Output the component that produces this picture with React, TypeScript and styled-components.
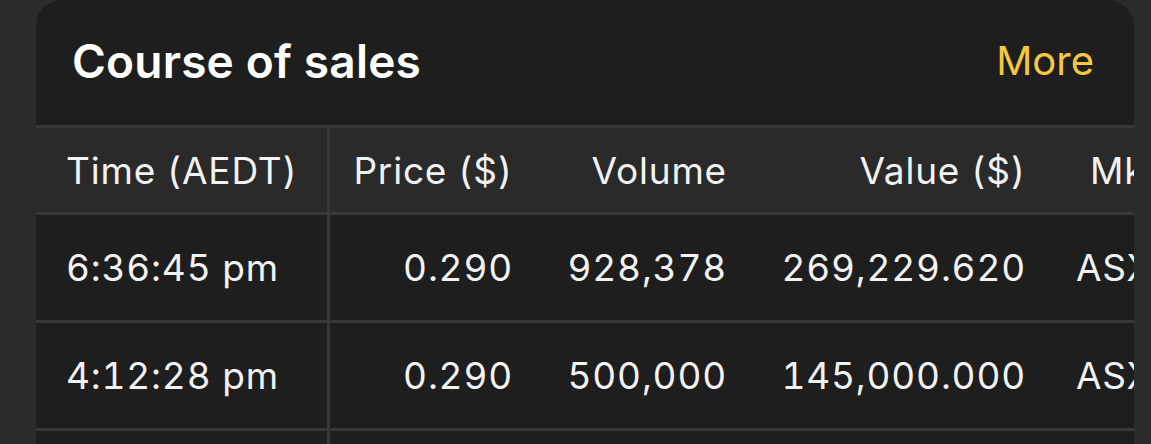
import React from "react";
import styled, { createGlobalStyle } from "styled-components";

const Global = createGlobalStyle`
  html, body { margin: 0; padding: 0; background: #2b2b2b; }
  body { font-family: Inter, "Noto Sans", sans-serif; -webkit-font-smoothing: antialiased; }
`;

const Page = styled.div`
  width: 1151px;
  height: 444px;
  overflow: hidden;
  background: #2b2b2b;
  padding-left: 36px;
  padding-right: 17px;
  box-sizing: border-box;
`;

const Card = styled.section`
  background: #1e1e1e;
  border-radius: 26px 26px 0 0;
  overflow: hidden;
  height: 100%;
`;

const Header = styled.header`
  height: 125px;
  display: flex;
  align-items: center;
  justify-content: space-between;
  padding: 0 40px 0 36px;
  box-sizing: border-box;
`;

const Title = styled.h2`
  margin: 0;
  font-size: 46px;
  font-weight: 600;
  color: #ffffff;
  letter-spacing: 0.2px;
  padding-bottom: 4px;
`;

const MoreLink = styled.a`
  font-size: 40px;
  font-weight: 400;
  color: #f5c842;
  text-decoration: none;
  padding-bottom: 4px;
`;

const Table = styled.div`
  display: grid;
  grid-template-columns: 294px 198px 214px 299px 200px;
  border-top: 3px solid #383838;
`;

const Cell = styled.div<{ $head?: boolean; $align?: "left" | "right"; $first?: boolean; $pl?: number }>`
  height: ${(p) => (p.$head ? 84 : 105)}px;
  background: ${(p) => (p.$head ? "#2a2a2a" : "#1e1e1e")};
  border-bottom: 3px solid #383838;
  border-right: ${(p) => (p.$first ? "3px solid #383838" : "none")};
  display: flex;
  align-items: center;
  justify-content: ${(p) => (p.$align === "right" ? "flex-end" : "flex-start")};
  padding-left: ${(p) => p.$pl ?? 30}px;
  padding-right: 15px;
  font-size: 37px;
  font-weight: 400;
  letter-spacing: 0.8px;
  color: #f2f2f2;
  white-space: nowrap;
  overflow: hidden;
  font-variant-numeric: tabular-nums;
`;

type Row = [string, string, string, string, string];

const rows: Row[] = [
  ["6:36:45 pm", "0.290", "928,378", "269,229.620", "ASX"],
  ["4:12:28 pm", "0.290", "500,000", "145,000.000", "ASX"],
  ["", "", "", "", ""],
];

const head: Row = ["Time (AEDT)", "Price ($)", "Volume", "Value ($)", "Mkt"];
const align: ("left" | "right")[] = ["left", "right", "right", "right", "left"];

export default function App() {
  return (
    <>
      <Global />
      <Page>
        <Card>
          <Header>
            <Title>Course of sales</Title>
            <MoreLink href="#">More</MoreLink>
          </Header>
          <Table>
            {head.map((h, i) => (
              <Cell key={h} $head $align={align[i]} $first={i === 0} $pl={i === 4 ? 49 : 30}>
                {h}
              </Cell>
            ))}
            {rows.map((r, ri) =>
              r.map((c, i) => (
                <Cell key={`${ri}-${i}`} $align={align[i]} $first={i === 0} $pl={i === 4 ? 35 : 30}>
                  {c}
                </Cell>
              ))
            )}
          </Table>
        </Card>
      </Page>
    </>
  );
}
